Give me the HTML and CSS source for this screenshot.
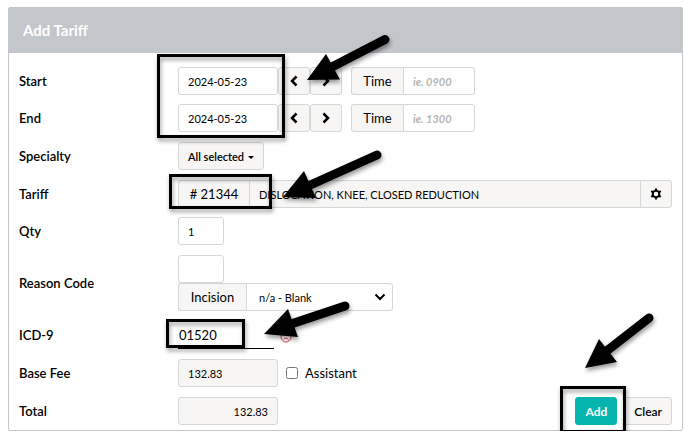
FILE: index.html
```html
<!DOCTYPE html>
<html lang="en">
<head>
  <meta charset="UTF-8" />
  <meta name="viewport" content="width=device-width, initial-scale=1.0" />
  <title>Add Tariff</title>
  <link rel="stylesheet" href="styles.css">
</head>
<body>

  <form class="panel">
    <h1 class="panel-header">Add Tariff</h1>

    <div class="panel-body">
      <div class="row compact">
        <label class="row-label" for="start">Start</label>
        <div class="controls">
          <input class="field date" id="start" type="text" value="2024-05-23" />
          <button class="btn step" type="button" aria-label="Previous start day">
            <svg width="8" height="12" viewBox="0 0 8 12"><path d="M6.500 1.500L2 6l4.500 4.500" /></svg>
          </button>
          <button class="btn step" type="button" aria-label="Next start day">
            <svg width="8" height="12" viewBox="0 0 8 12"><path d="M1.500 1.500L6 6l-4.500 4.500" /></svg>
          </button>
          <div class="group time-group">
            <label class="addon" for="start-time">Time</label>
            <input class="field time" id="start-time" type="text" placeholder="ie. 0900" />
          </div>
        </div>
      </div>

      <div class="row">
        <label class="row-label" for="end">End</label>
        <div class="controls">
          <input class="field date" id="end" type="text" value="2024-05-23" />
          <button class="btn step" type="button" aria-label="Previous end day">
            <svg width="8" height="12" viewBox="0 0 8 12"><path d="M6.500 1.500L2 6l4.500 4.500" /></svg>
          </button>
          <button class="btn step" type="button" aria-label="Next end day">
            <svg width="8" height="12" viewBox="0 0 8 12"><path d="M1.500 1.500L6 6l-4.500 4.500" /></svg>
          </button>
          <div class="group time-group">
            <label class="addon" for="end-time">Time</label>
            <input class="field time" id="end-time" type="text" placeholder="ie. 1300" />
          </div>
        </div>
      </div>

      <div class="row">
        <label class="row-label" for="specialty">Specialty</label>
        <div class="controls">
          <button class="btn dropdown" id="specialty" type="button">All selected<span class="caret"></span></button>
        </div>
      </div>

      <div class="row compact">
        <label class="row-label" for="tariff">Tariff</label>
        <div class="controls group">
          <span class="addon code"># 21344</span>
          <input class="field tariff" id="tariff" type="text" value="DISLOCATION, KNEE, CLOSED REDUCTION" readonly />
          <button class="btn step last" type="button" aria-label="Tariff settings">
            <svg class="gear" width="12" height="12" viewBox="0 0 12 12">
              <circle cx="6" cy="6" r="3.300" />
              <path d="M6 .5v2M6 9.500v2M1.200 3.200l1.700 1M9.100 7.800l1.700 1M1.200 8.800l1.700-1M9.100 4.200l1.700-1" />
            </svg>
          </button>
        </div>
      </div>

      <div class="row">
        <label class="row-label" for="qty">Qty</label>
        <div class="controls">
          <input class="field short" id="qty" type="text" value="1" />
        </div>
      </div>

      <div class="row">
        <label class="row-label" for="reason">Reason Code</label>
        <div class="controls stacked">
          <input class="field short" id="reason" type="text" />
          <div class="group">
            <label class="addon incision" for="incision">Incision</label>
            <div class="select-wrap">
              <select class="field select" id="incision">
                <option>n/a - Blank</option>
              </select>
              <svg class="chevron" width="12" height="8" viewBox="0 0 12 8"><path d="M1.500 1.500L6 6l4.500-4.500" /></svg>
            </div>
          </div>
        </div>
      </div>

      <div class="row">
        <label class="row-label" for="icd">ICD-9</label>
        <div class="controls">
          <input class="icd" id="icd" type="text" value="01520" />
          <svg class="sad" width="12" height="12" viewBox="0 0 12 12">
            <circle cx="6" cy="6" r="5" />
            <path d="M3.500 8.800Q6 5.500 8.500 8.800M3.500 4.500h1M7.500 4.500h1" />
          </svg>
        </div>
      </div>

      <div class="row">
        <label class="row-label" for="base-fee">Base Fee</label>
        <div class="controls">
          <input class="field date" id="base-fee" type="text" value="132.83" readonly />
          <label class="check"><input type="checkbox" />Assistant</label>
        </div>
      </div>

      <div class="row">
        <label class="row-label" for="total">Total</label>
        <div class="controls">
          <input class="field date total" id="total" type="text" value="132.83" readonly />
          <div class="actions">
            <button class="btn primary" type="submit">Add</button>
            <button class="btn" type="reset">Clear</button>
          </div>
        </div>
      </div>
    </div>

    <!-- callouts over the fields -->
    <svg class="callouts" width="400" height="360" viewBox="9 8 400 360" aria-hidden="true">
      <rect x="158.500" y="55.500" width="125" height="81" />
      <rect x="170.500" y="175.500" width="100" height="32" />
      <rect x="167.500" y="320.500" width="76" height="26" />
      <path class="shaft" d="M385 39.500L328 69" />
      <path class="head" d="M307 80L326 54L340 79.500Z" />
      <path class="shaft" d="M377 155L308 186" />
      <path class="head" d="M283 197L304 171L316 198Z" />
      <path class="shaft" d="M345 306L288 325" />
      <path class="head" d="M264 334L288 309L298 337Z" />
    </svg>

    <!-- callout over the Add button -->
    <svg class="callouts right" width="130" height="136" viewBox="552 300 130 136" aria-hidden="true">
      <rect x="561.500" y="387.500" width="63" height="44" />
      <path class="shaft" d="M649 318L604 353" />
      <path class="head" d="M585 368L599 339L617 362Z" />
    </svg>
  </form>

</body>
</html>
```
FILE: styles.css
```css
* {
  box-sizing: border-box;
}
body {
  margin: 7px 8px 6px;
  background: #fff;
  font-family: Lato, sans-serif;
  font-size: 13px;
  color: #000;
}
input, select, button {
  font-family: inherit;
  color: inherit;
  margin: 0;
}
.panel {
  position: relative;
  border: 1px solid #c3c6cb;
  border-radius: 2px;
}
.panel-header {
  margin: 0;
  padding: 0 14px;
  line-height: 45px;
  font-size: 15px;
  font-weight: bold;
  color: #fff;
  background: #c3c6cb;
}
.panel-body {
  padding: 14px 10px 5px;
}
.row {
  display: flex;
  align-items: center;
  margin-bottom: 10px;
}
.row.compact {
  margin-bottom: 9px;
}
.row:last-child {
  margin-bottom: 0;
}
.row-label {
  flex: 0 0 159px;
  font-weight: 600;
}
.controls {
  flex: 1;
  display: flex;
  align-items: center;
  min-height: 28px;
}
.controls.stacked {
  flex-direction: column;
  align-items: flex-start;
}
.field {
  height: 28px;
  padding: 0 9px;
  border: 1px solid #d3d7d5;
  border-radius: 3px;
  background: #fff;
  font-size: 11px;
}
.field[readonly] {
  background: #f7f6f5;
}
.date {
  width: 100px;
}
.short {
  width: 46px;
}
.total {
  text-align: right;
}
.btn {
  height: 28px;
  padding: 0 9px;
  border: 1px solid #d3d7d5;
  border-radius: 3px;
  background: #f7f6f5;
  font-size: 12px;
  font-weight: 600;
}
.dropdown {
  font-size: 11px;
}
.step {
  display: flex;
  align-items: center;
  justify-content: center;
  flex: none;
  width: 32px;
  padding: 0;
}
.step.last {
  border-radius: 0 3px 3px 0;
}
.step svg, .chevron {
  fill: none;
  stroke: #000;
  stroke-width: 2.5;
}
.step .gear {
  stroke-width: 2;
}
.caret {
  display: inline-block;
  margin-left: 4px;
  vertical-align: middle;
  border: 3px solid transparent;
  border-top-color: #000;
  border-bottom: 0;
}
.group {
  display: flex;
}
.time-group {
  margin-left: 9px;
}
.addon {
  display: flex;
  align-items: center;
  justify-content: center;
  width: 52px;
  height: 28px;
  border: 1px solid #d3d7d5;
  border-right: 0;
  border-radius: 3px 0 0 3px;
  background: #f7f6f5;
}
.group .field {
  border-radius: 0 3px 3px 0;
}
.time {
  width: 72px;
}
.time::placeholder {
  color: #b5b5b5;
  font-style: italic;
  font-weight: bold;
}
.code {
  width: 71px;
}
.group .tariff {
  flex: 1;
  min-width: 0;
  border-right: 0;
  border-radius: 0;
}
.incision {
  width: 68px;
}
.select-wrap {
  position: relative;
}
.select {
  width: 147px;
  padding: 0 12px;
  appearance: none;
}
.chevron {
  position: absolute;
  right: 7px;
  top: 10px;
  stroke-width: 2;
  pointer-events: none;
}
.icd {
  width: 96px;
  height: 28px;
  padding: 0 1px;
  border: 0;
  border-bottom: 1px solid #000;
  background: none;
  font-size: 13px;
}
.sad {
  margin: 4px 0 0 6px;
  fill: none;
  stroke: #d9474b;
}
.check {
  display: flex;
  align-items: center;
  gap: 7px;
  margin-left: 8px;
}
.check input {
  width: 12px;
  height: 12px;
}
.actions {
  display: flex;
  gap: 7px;
  margin-left: auto;
}
.primary {
  border-color: #06b5ad;
  background: #06b5ad;
  color: #fff;
  font-weight: bold;
}
.callouts {
  position: absolute;
  left: 0;
  top: 0;
  overflow: visible;
  pointer-events: none;
  filter: drop-shadow(1px 3px 2px rgba(0, 0, 0, 0.4));
}
.callouts.right {
  left: auto;
  top: auto;
  right: 0;
  bottom: -6px;
}
.callouts rect {
  fill: none;
  stroke: #000;
  stroke-width: 3;
}
.callouts .shaft {
  stroke: #000;
  stroke-width: 9;
  stroke-linecap: round;
}
```
